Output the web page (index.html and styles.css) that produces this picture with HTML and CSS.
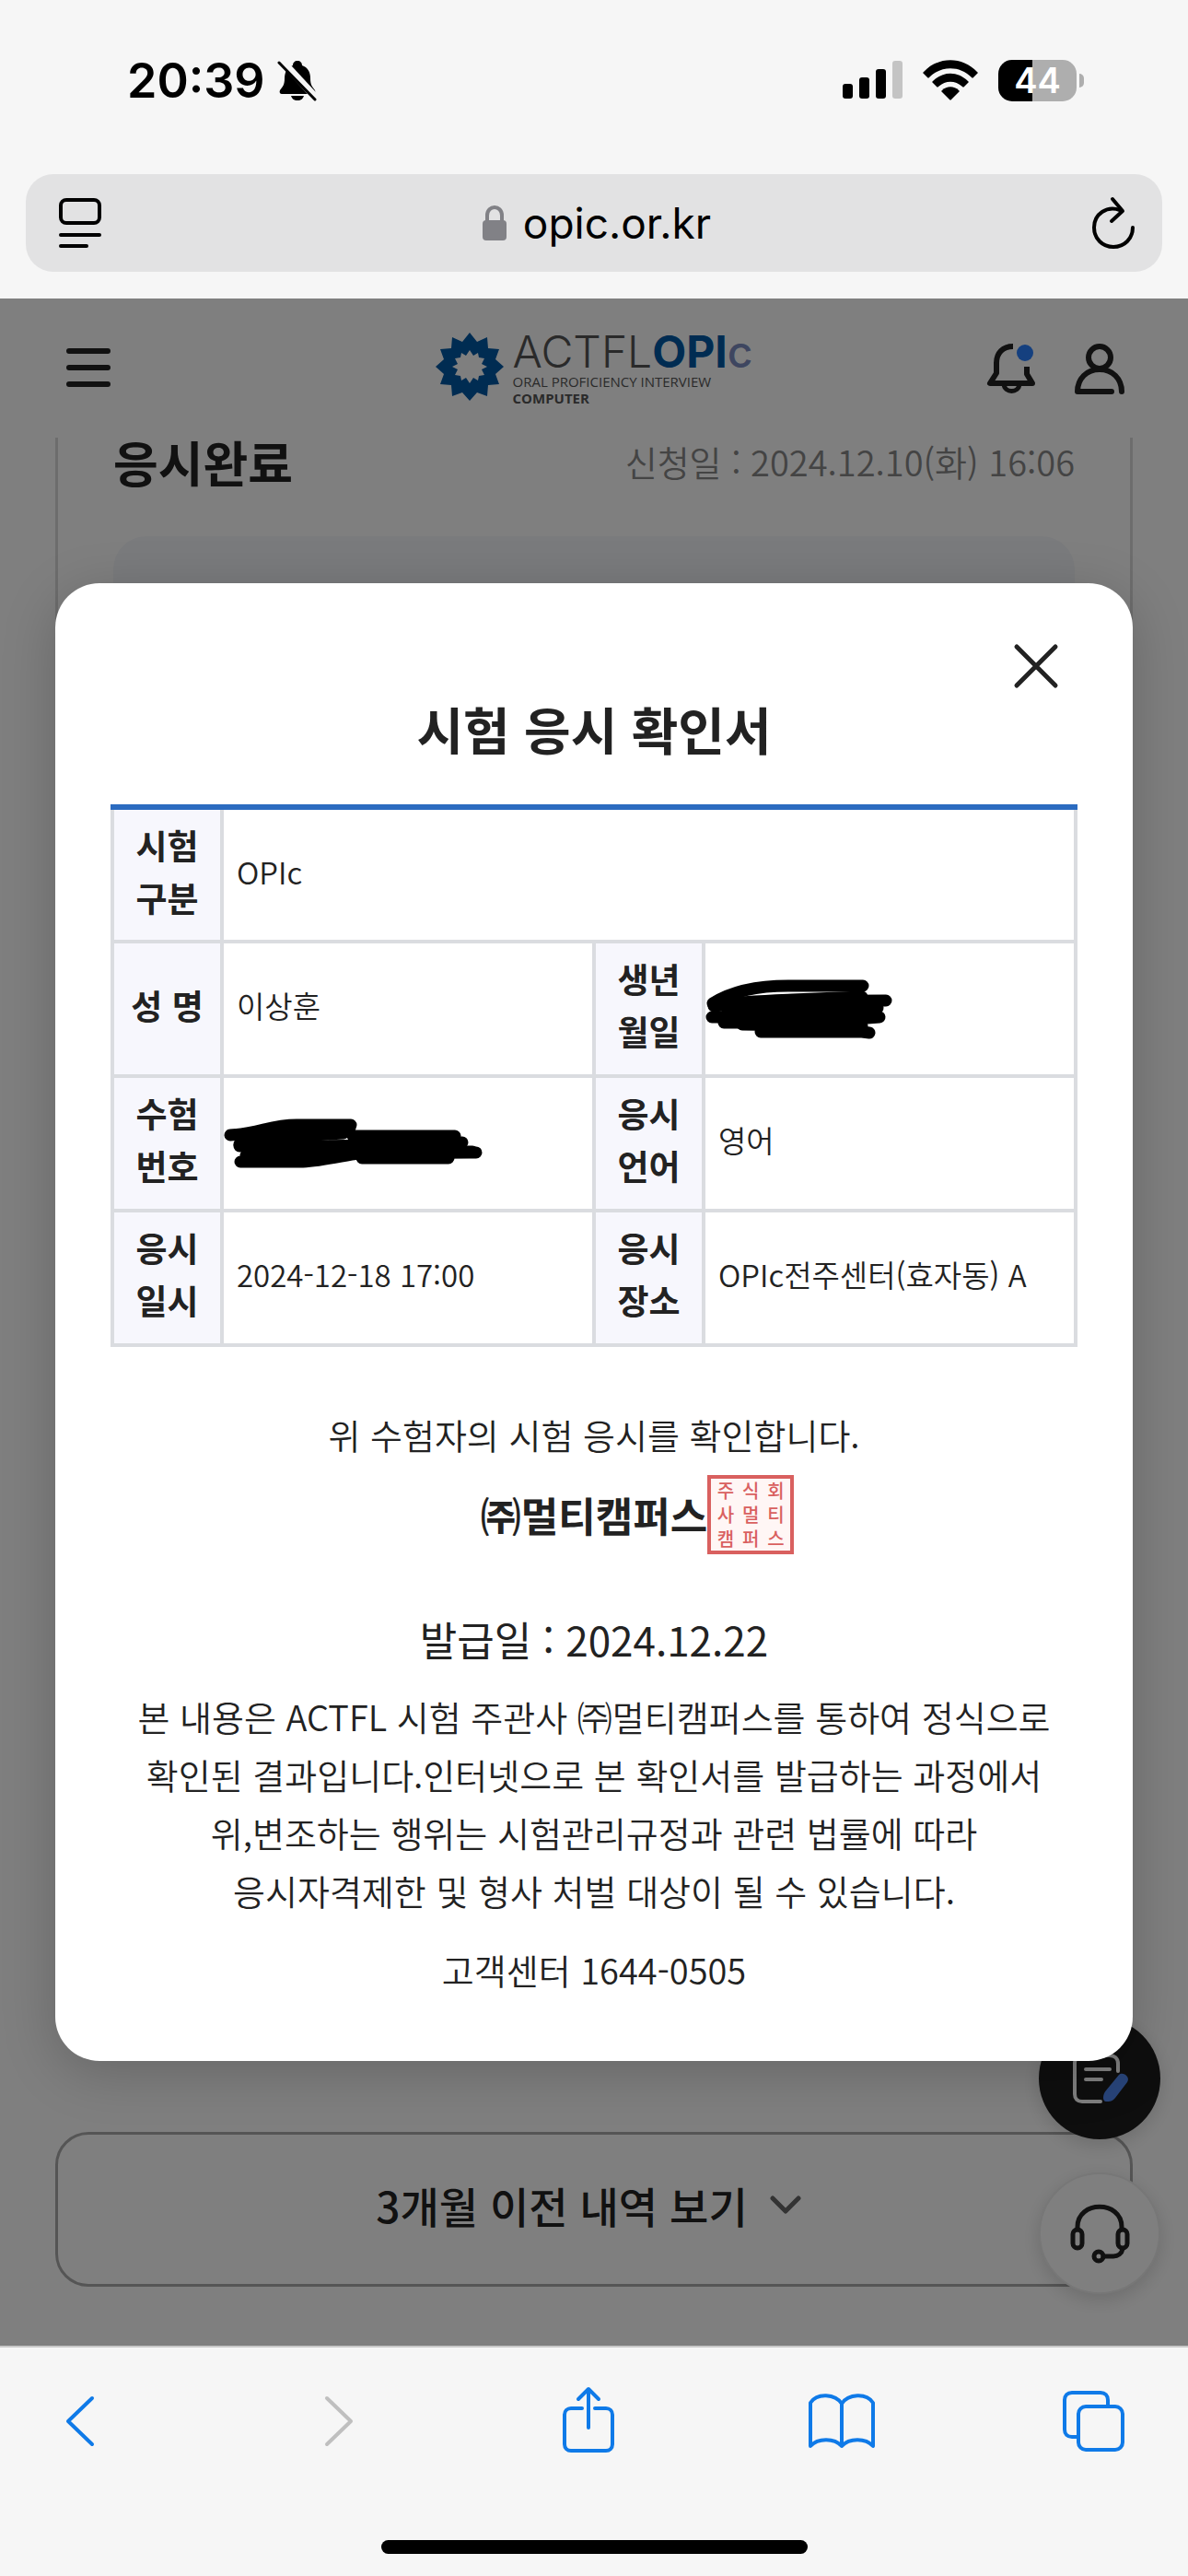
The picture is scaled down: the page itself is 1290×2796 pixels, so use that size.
FILE: index.html
```html
<!DOCTYPE html>
<html lang="ko">
<head>
  <meta charset="UTF-8" />
  <meta name="viewport" content="width=device-width, initial-scale=1.0" />
  <title>시험 응시 확인서</title>
  <link rel="stylesheet" href="styles.css">
</head>
<body>

<div class="status-bar">
  <div class="status-left">
    <span class="clock">20:39</span>
    <svg class="mute" viewBox="0 0 46 46">
      <path d="M23 2c3 0 5 2 5 5 6 2 9 7 9 14 0 7 2 9 5 13 1 2 0 4-2 4H6c-2 0-3-2-2-4 3-4 5-6 5-13 0-7 3-12 9-14 0-3 2-5 5-5z"/>
      <path d="M16 40h14c-1 3-3 5-7 5s-6-2-7-5z"/>
      <path d="M6 2l38 41" stroke="#f6f6f6" stroke-width="8"/>
      <path d="M3 4l39 40" stroke="#000" stroke-width="3" stroke-linecap="round"/>
    </svg>
  </div>
  <div class="status-right">
    <svg width="65" height="42" viewBox="0 0 65 42">
      <rect x="0" y="25" width="11" height="16" rx="3"/>
      <rect x="18" y="18" width="11" height="23" rx="3"/>
      <rect x="36" y="9" width="11" height="32" rx="3"/>
      <rect x="54" y="0" width="11" height="41" rx="3" fill="#c4c4c4"/>
    </svg>
    <svg width="60" height="44" viewBox="0 0 60 44">
      <path d="M1 13C17-4 43-4 59 13c1 1 1 1 0 2l-4 4c-1 1-1 1-2 0C40 6 20 6 7 19c-1 1-1 1-2 0l-4-4c-1-1-1-1 0-2z"/>
      <path d="M11 23c11-11 27-11 38 0 1 1 1 1 0 2l-4 4c-1 1-1 1-2 0-8-7-18-7-26 0-1 1-1 1-2 0l-4-4c-1-1-1-1 0-2z"/>
      <path d="M21 33c5-5 13-5 18 0 1 1 1 1 0 2l-8 8c-1 1-1 1-2 0l-8-8c-1-1-1-1 0-2z"/>
    </svg>
    <div class="battery"><span>44</span></div>
  </div>
</div>

<div class="url-bar">
  <button class="url-btn" aria-label="페이지 메뉴">
    <svg width="54" height="58" viewBox="0 0 54 58" fill="none" stroke="#000" stroke-width="4" stroke-linecap="round">
      <rect x="6" y="4" width="42" height="25" rx="6"/>
      <path d="M6 42h42M6 54h28"/>
    </svg>
  </button>
  <a class="address" href="#">
    <svg width="26" height="38" viewBox="0 0 26 38">
      <rect y="16" width="26" height="22" rx="4" fill="#818186"/>
      <path d="M5 18v-7c0-12 16-12 16 0v7" fill="none" stroke="#818186" stroke-width="4"/>
    </svg>
    <span>opic.or.kr</span>
  </a>
  <button class="url-btn" aria-label="새로고침">
    <svg width="54" height="58" viewBox="0 0 54 58" fill="none" stroke="#000" stroke-width="4" stroke-linecap="round" stroke-linejoin="round">
      <path d="M34 15c-14-5-28 4-28 19 0 12 9 21 21 21s21-9 21-21"/>
      <path d="M26 3l11 13-12 11"/>
    </svg>
  </button>
</div>

<main class="viewport">
  <header class="site-header">
    <button class="icon-btn" aria-label="메뉴">
      <svg width="64" height="64" viewBox="0 0 64 64" stroke="#222" stroke-width="6" stroke-linecap="round">
        <path d="M11 13h42M11 31h42M11 49h42"/>
      </svg>
    </button>
    <a class="logo" href="#">
      <svg width="74" height="74" viewBox="-37 -35 74 74">
        <path fill="#0058a4" fill-rule="evenodd" d="M0-37L8-27 19-32 20-20 32-19 28-8 37 0 28 8 32 19 20 20 19 32 8 28 0 37-8 28-19 32-20 20-32 19-28 8-37 0-28-8-32-19-20-20-19-32-8-27z
          M0-18L-4-12-9-15-10-10-16-9-13-3-19 0-13 3-16 9-10 10-9 15-4 12 0 18 4 12 9 15 10 10 16 9 13 3 19 0 13-3 16-9 10-10 9-15 4-12z"/>
      </svg>
      <span class="logo-text">
        <span class="logo-name">ACTFL<b>OPI</b><i>c</i></span>
        <span class="logo-sub">ORAL PROFICIENCY INTERVIEW</span>
        <span class="logo-sub strong">COMPUTER</span>
      </span>
    </a>
    <div class="header-right">
      <button class="icon-btn" aria-label="알림">
        <svg width="64" height="64" viewBox="0 0 64 64" fill="none" stroke="#222" stroke-width="6" stroke-linejoin="round">
          <path d="M34 8C23 8 16 15 16 26v11L9 48h46l-6-10v-8"/>
          <path d="M24 49c1 10 16 10 17 0" stroke-width="5"/>
          <circle cx="47" cy="15" r="9" fill="#2a80ff" stroke="none"/>
        </svg>
      </button>
      <button class="icon-btn" aria-label="내 정보">
        <svg width="64" height="64" viewBox="0 0 64 64" fill="none" stroke="#222" stroke-width="6" stroke-linecap="round" stroke-linejoin="round">
          <circle cx="32" cy="20" r="12"/>
          <path d="M56 57c0-14-10-24-24-24S8 43 8 57h37"/>
        </svg>
      </button>
    </div>
  </header>

  <section class="card">
    <div class="card-head">
      <h2>응시완료</h2>
      <span>신청일 : 2024.12.10(화) 16:06</span>
    </div>
    <div class="card-box"></div>
  </section>

  <button class="more-btn">
    3개월 이전 내역 보기
    <svg width="34" height="20" viewBox="0 0 34 20" fill="none" stroke="#666" stroke-width="5" stroke-linecap="round" stroke-linejoin="round">
      <path d="M3 3l14 14L31 3"/>
    </svg>
  </button>

  <div class="floating">
    <button class="fab dark" aria-label="설문">
      <svg width="72" height="64" viewBox="0 0 72 64" fill="none" stroke="#fff" stroke-width="4" stroke-linecap="round">
        <path d="M56 24v-8c0-6-4-9-9-9H17c-5 0-8 3-8 8v34c0 5 3 8 8 8h20"/>
        <path d="M21 22h26M21 33h17"/>
        <path d="M57 28c4-4 13 2 9 8L53 53c-3 4-6 4-10 4-2 0-3-2-3-4 0-3 1-6 3-8z" fill="#5189f2" stroke="none"/>
      </svg>
    </button>
    <button class="fab" aria-label="고객센터">
      <svg width="72" height="72" viewBox="0 0 72 72" fill="none" stroke="#222" stroke-width="5" stroke-linecap="round">
        <path d="M12 32v-3C12 0 60 0 60 29v3"/>
        <rect x="7" y="32" width="10" height="20" rx="5"/>
        <rect x="56" y="32" width="10" height="20" rx="5"/>
        <circle cx="35" cy="61" r="5"/>
        <path d="M40 61h11c5 0 9-3 10-8"/>
      </svg>
    </button>
  </div>

  <div class="overlay">
    <div class="modal" role="dialog" aria-labelledby="modal-title">
      <button class="close" aria-label="닫기">
        <svg width="60" height="60" viewBox="0 0 60 60" stroke="#222" stroke-width="5" stroke-linecap="round">
          <path d="M9 9l42 42M51 9L9 51"/>
        </svg>
      </button>
      <h1 id="modal-title">시험 응시 확인서</h1>

      <table>
        <colgroup>
          <col class="col-th"><col><col class="col-th"><col>
        </colgroup>
        <tbody>
          <tr>
            <th scope="row">시험<br>구분</th>
            <td colspan="3">OPIc</td>
          </tr>
          <tr>
            <th scope="row">성 명</th>
            <td>이상훈</td>
            <th scope="row">생년<br>월일</th>
            <td class="masked">
              <svg width="206" height="66" viewBox="0 0 206 66" fill="none" stroke="#000" stroke-width="13" stroke-linecap="round" stroke-linejoin="round">
                <path d="M8 27C30 13 60 8 90 8h81"/>
                <path d="M9 29c30-4 60-5 85-6l76-3"/>
                <path d="M9 30c50-5 110-6 187-6"/>
                <path d="M7 42h60l120-10"/>
                <path d="M20 48h90l79-6M24 37h160"/>
                <path d="M60 58h110l8 1M40 50l130 2M90 32h90"/>
              </svg>
            </td>
          </tr>
          <tr>
            <th scope="row">수험<br>번호</th>
            <td class="masked">
              <svg width="284" height="54" viewBox="0 0 284 54" fill="none" stroke="#000" stroke-width="13" stroke-linecap="round" stroke-linejoin="round">
                <path d="M7 18C40 16 50 7 79 7h59"/>
                <path d="M17 28l70-10 50-8M30 22l100-6"/>
                <path d="M17 30h140l94-11H140"/>
                <path d="M24 40c30-6 60-10 90-10l145-4M36 36h80"/>
                <path d="M18 47h68c20-1 45-7 60-9l128-1"/>
                <path d="M100 36h170M150 43h94"/>
              </svg>
            </td>
            <th scope="row">응시<br>언어</th>
            <td>영어</td>
          </tr>
          <tr>
            <th scope="row">응시<br>일시</th>
            <td>2024-12-18 17:00</td>
            <th scope="row">응시<br>장소</th>
            <td>OPIc전주센터(효자동) A</td>
          </tr>
        </tbody>
      </table>

      <p class="confirm">위 수험자의 시험 응시를 확인합니다.</p>
      <div class="company">
        <strong>㈜멀티캠퍼스</strong>
        <div class="seal">
          <span>주</span><span>식</span><span>회</span>
          <span>사</span><span>멀</span><span>티</span>
          <span>캠</span><span>퍼</span><span>스</span>
        </div>
      </div>
      <p class="issued">발급일 : 2024.12.22</p>
      <p class="notice">
        본 내용은 ACTFL 시험 주관사 ㈜멀티캠퍼스를 통하여 정식으로<br>
        확인된 결과입니다.인터넷으로 본 확인서를 발급하는 과정에서<br>
        위,변조하는 행위는 시험관리규정과 관련 법률에 따라<br>
        응시자격제한 및 형사 처벌 대상이 될 수 있습니다.
      </p>
      <p class="call">고객센터 1644-0505</p>
    </div>
  </div>
</main>

<nav class="toolbar">
  <div class="toolbar-icons">
    <button class="tool" aria-label="뒤로">
      <svg viewBox="0 0 80 80"><path d="M53 15L27 40l26 25"/></svg>
    </button>
    <button class="tool off" aria-label="앞으로">
      <svg viewBox="0 0 80 80"><path d="M33 15l26 25-26 25"/></svg>
    </button>
    <button class="tool" aria-label="공유">
      <svg viewBox="0 0 80 80"><path d="M34 26H22c-4 0-7 3-7 7v32c0 4 3 7 7 7h38c4 0 7-3 7-7V33c0-4-3-7-7-7H48M41 47V6M30 16L41 5l11 11"/></svg>
    </button>
    <button class="tool" aria-label="책갈피">
      <svg viewBox="0 0 80 80"><path d="M41 21c-7-11-27-12-34-1v47c8-9 26-9 34 0 8-9 26-9 34 0V20c-7-11-27-10-34 1zv46"/></svg>
    </button>
    <button class="tool" aria-label="탭">
      <svg viewBox="0 0 80 80"><path d="M55 23v-6c0-5-3-8-8-8H16c-5 0-8 3-8 8v32c0 5 3 8 8 8h5"/><rect x="23" y="24" width="48" height="47" rx="8"/></svg>
    </button>
  </div>
  <div class="home-indicator"></div>
</nav>

</body>
</html>
```

FILE: styles.css
```css
* {
  box-sizing: border-box;
  margin: 0;
  padding: 0;
}

body {
  display: flex;
  flex-direction: column;
  min-height: 100vh;
  background-color: #f6f6f6;
  color: #222;
  font-family: "Noto Sans CJK KR", sans-serif;
}

button {
  background: none;
  border: none;
  color: inherit;
  font-family: inherit;
  cursor: pointer;
}

a {
  color: inherit;
  text-decoration: none;
}

svg {
  display: block;
}

/* browser top */
.status-bar {
  display: flex;
  justify-content: space-between;
  align-items: center;
  height: 174px;
  padding: 0 113px 0 138px;
  color: #000;
  font-family: Inter, sans-serif;
}

.status-left {
  display: flex;
  align-items: center;
  gap: 12px;
}

.clock {
  font-size: 52px;
  font-weight: 600;
}

.mute {
  width: 46px;
  height: 46px;
}

.status-right {
  display: flex;
  align-items: center;
  gap: 22px;
}

.battery {
  position: relative;
  width: 85px;
  height: 45px;
  margin-right: 8px;
  border-radius: 15px;
  background: linear-gradient(to right, #000 44%, #aeaeae 44%);
  color: #fff;
  font-size: 38px;
  font-weight: 600;
  line-height: 45px;
  text-align: center;
}

.battery::after {
  content: "";
  position: absolute;
  right: -8px;
  top: 15px;
  width: 5px;
  height: 15px;
  border-radius: 0 5px 5px 0;
  background: #aeaeae;
}

.url-bar {
  display: flex;
  justify-content: space-between;
  align-items: center;
  height: 106px;
  margin: 15px 28px 29px;
  padding: 0 26px 0 32px;
  border-radius: 30px;
  background-color: #e2e2e3;
  color: #000;
}

.address {
  display: flex;
  align-items: center;
  gap: 18px;
  font-family: Inter, sans-serif;
  font-size: 46px;
}

/* page */
.viewport {
  position: relative;
  flex: 1;
  display: flex;
  flex-direction: column;
  background-color: #fff;
}

.site-header {
  display: grid;
  grid-template-columns: 1fr auto 1fr;
  align-items: center;
  height: 151px;
  padding: 0 64px;
}

.icon-btn {
  width: 64px;
  height: 64px;
}

.header-right {
  display: flex;
  justify-content: flex-end;
  gap: 32px;
}

.logo {
  display: flex;
  align-items: center;
  gap: 10px;
}

.logo svg {
  overflow: visible;
}

.logo-text {
  display: flex;
  flex-direction: column;
  color: #555;
  font-family: Inter, sans-serif;
}

.logo-name {
  font-size: 48px;
  font-weight: 300;
  line-height: 46px;
}

.logo-name b {
  color: #0058a4;
  font-weight: 700;
}

.logo-name i {
  color: #7c8cc0;
  font-style: normal;
  font-weight: 500;
}

.logo-sub {
  font-family: "Open Sans", sans-serif;
  font-size: 15px;
  line-height: 18px;
}

.logo-sub.strong {
  font-weight: 700;
}

.card {
  flex: 1;
  display: flex;
  flex-direction: column;
  margin: 0 60px 120px;
  padding: 0 60px 60px;
  border: 3px solid #dadada;
  border-top: none;
  border-radius: 0 0 36px 36px;
}

.card-head {
  display: flex;
  justify-content: space-between;
  align-items: center;
  height: 52px;
  margin-bottom: 55px;
}

.card-head h2 {
  font-size: 53px;
  font-weight: 700;
  line-height: 52px;
}

.card-head span {
  color: #888;
  font-size: 38px;
  font-weight: 350;
  line-height: 52px;
}

.card-box {
  flex: 1;
  border-radius: 36px;
  background-color: #f4f6fa;
}

.more-btn {
  display: flex;
  justify-content: center;
  align-items: center;
  gap: 24px;
  height: 168px;
  margin: 0 60px 64px;
  padding: 0 12px 10px 0;
  border: 3px solid #aaa;
  border-radius: 36px;
  font-size: 46px;
  font-weight: 500;
}

.floating {
  position: absolute;
  right: 30px;
  bottom: 56px;
  display: flex;
  flex-direction: column;
  gap: 36px;
}

.fab {
  display: flex;
  justify-content: center;
  align-items: center;
  width: 132px;
  height: 132px;
  border: 2px solid #eee;
  border-radius: 50%;
  background-color: #fff;
  box-shadow: 0 6px 20px rgba(0, 0, 0, 0.15);
}

.fab.dark {
  border: none;
  background-color: #1c1c1c;
}

/* certificate popup */
.overlay {
  position: absolute;
  inset: 0;
  display: flex;
  justify-content: center;
  align-items: center;
  padding: 0 60px;
  background-color: rgba(0, 0, 0, 0.5);
}

.modal {
  position: relative;
  width: 100%;
  padding: 125px 60px 69px;
  border-radius: 48px;
  background-color: #fff;
  box-shadow: 0 12px 60px rgba(0, 0, 0, 0.2);
  text-align: center;
}

.close {
  position: absolute;
  top: 60px;
  right: 75px;
}

.modal h1 {
  margin-bottom: 51px;
  font-size: 55px;
  font-weight: 700;
  line-height: 64px;
}

table {
  width: 100%;
  border-collapse: collapse;
  table-layout: fixed;
}

.col-th {
  width: 119px;
}

th,
td {
  height: 146px;
  border: 4px solid #dadce0;
}

tr:first-child th,
tr:first-child td {
  border-top: 6px solid #2b6bc0;
}

th {
  padding-bottom: 8px;
  background-color: #f7f7fd;
  font-size: 37px;
  font-weight: 700;
  line-height: 57px;
}

td {
  padding: 0 14px 8px;
  font-size: 33px;
  font-weight: 350;
  text-align: left;
}

td.masked {
  padding: 0;
}

.confirm {
  margin-top: 65px;
  font-size: 38px;
  font-weight: 350;
  line-height: 60px;
}

.company {
  display: grid;
  grid-template-columns: 1fr auto 1fr;
  align-items: center;
  height: 86px;
  margin: 14px 0 62px;
}

.company strong {
  grid-column: 2;
  font-size: 44px;
  font-weight: 700;
}

.seal {
  display: grid;
  grid-template-columns: repeat(3, 1fr);
  grid-template-rows: repeat(3, 1fr);
  place-items: center;
  width: 94px;
  height: 86px;
  padding: 0 2px;
  border: 4px solid #d9605f;
  background-color: #fff6f5;
  color: #d9605f;
  font-size: 20px;
  font-weight: 500;
  line-height: 26px;
}

.issued {
  margin-bottom: 22px;
  font-size: 44px;
  font-weight: 400;
  line-height: 60px;
}

.notice {
  margin: 0 -20px 25px;
  font-size: 38px;
  font-weight: 350;
  line-height: 63px;
}

.call {
  font-size: 38px;
  font-weight: 350;
  line-height: 60px;
}

/* browser bottom */
.toolbar {
  padding: 40px 0 24px;
  border-top: 2px solid #c8c8c8;
}

.toolbar-icons {
  display: flex;
  justify-content: space-between;
  padding: 0 62px 0 47px;
}

.tool {
  width: 80px;
  height: 80px;
}

.tool svg {
  fill: none;
  stroke: #0f7ae8;
  stroke-width: 4;
  stroke-linecap: round;
  stroke-linejoin: round;
}

.tool.off svg {
  stroke: #bfbfbf;
}

.home-indicator {
  width: 463px;
  height: 15px;
  margin: 89px auto 0;
  border-radius: 8px;
  background-color: #000;
}
```
